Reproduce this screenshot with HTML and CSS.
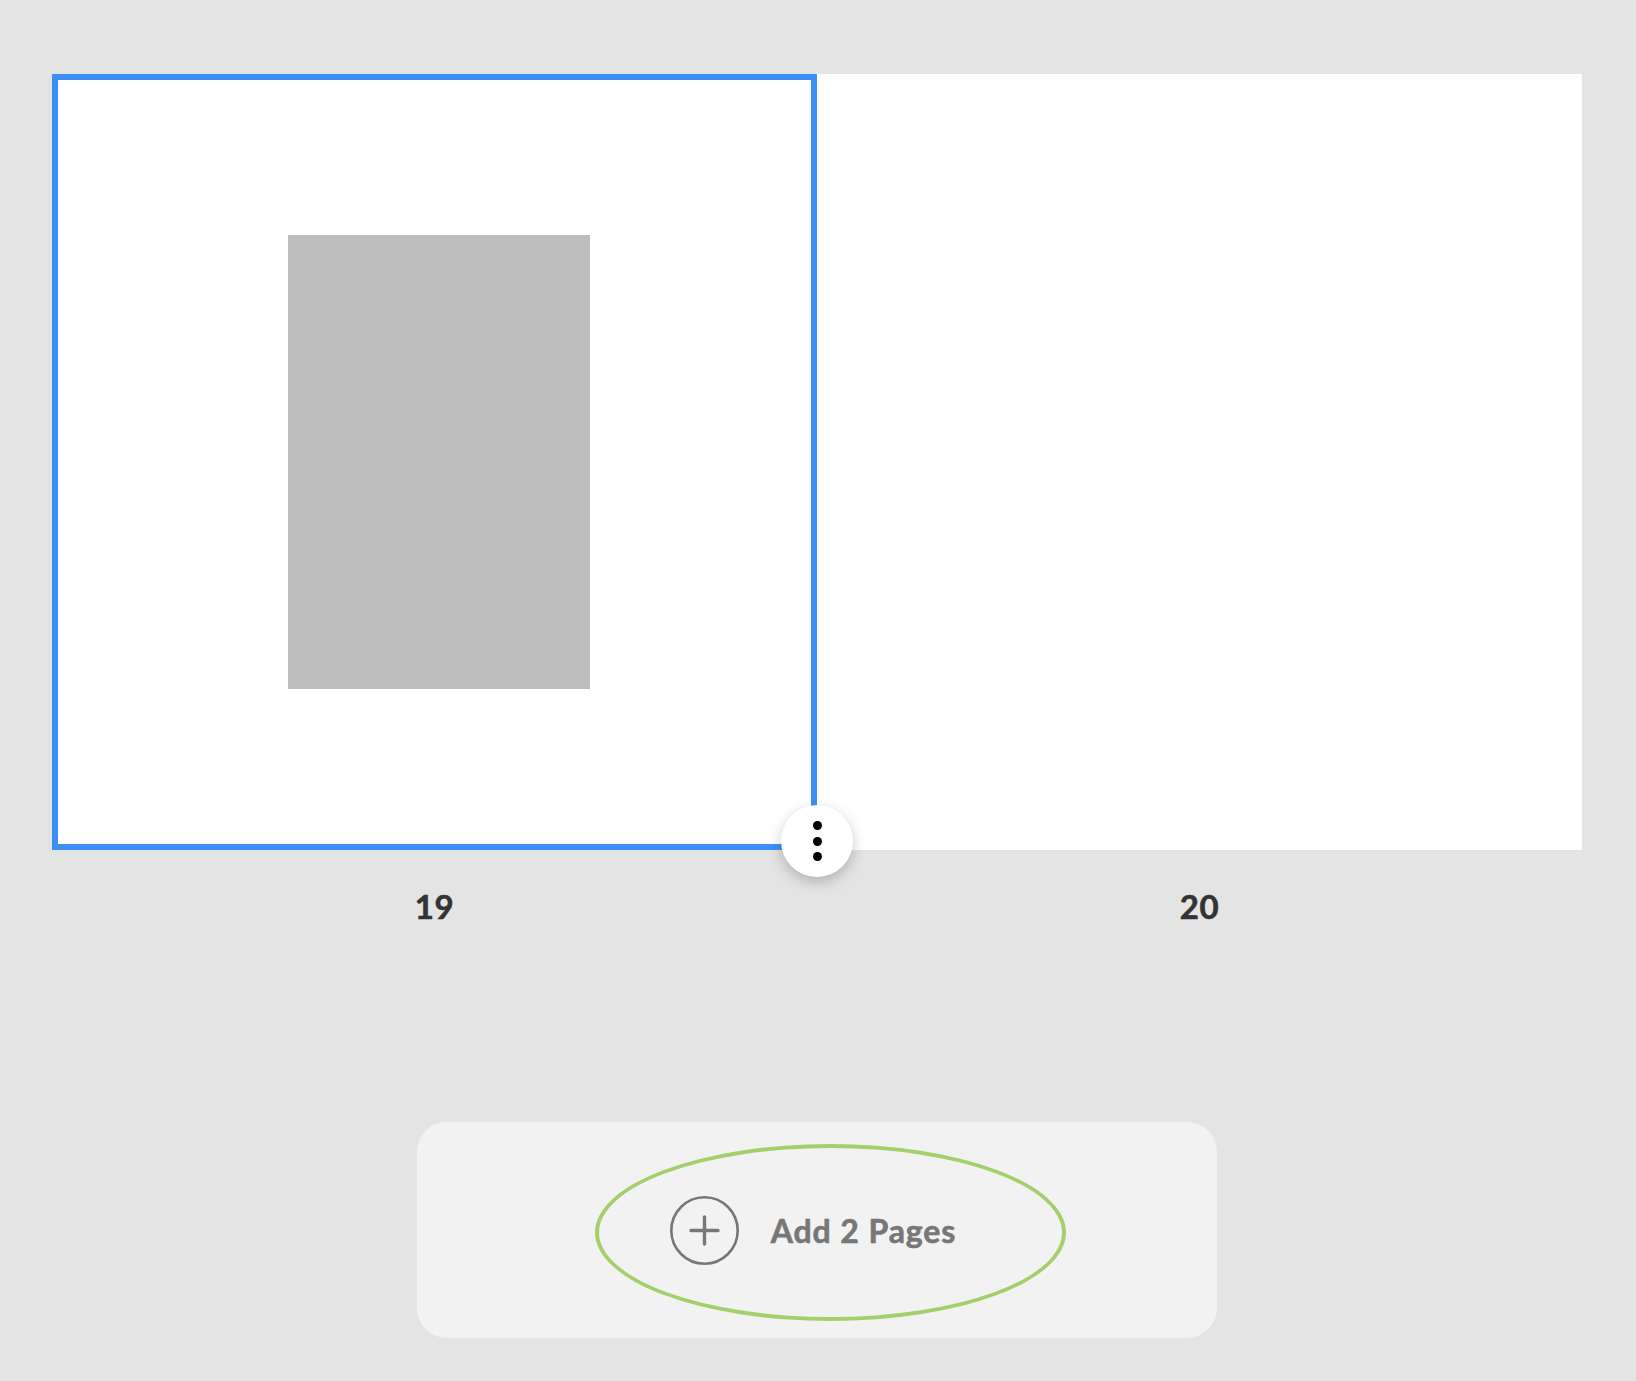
FILE: index.html
```html
<!DOCTYPE html>
<html lang="en">
<head>
<meta charset="utf-8">
<title>Pages 19–20</title>
<link rel="stylesheet" href="styles.css">
</head>
<body>
<main class="canvas">
  <div class="spread-wrap">
    <div class="spread">
      <div class="page page--selected">
        <div class="photo-slot"></div>
      </div>
      <div class="page"></div>
    </div>
    <button class="menu-btn" type="button" aria-label="More options">
      <span class="dot"></span><span class="dot"></span><span class="dot"></span>
    </button>
  </div>
  <div class="labels">
    <div class="label">19</div>
    <div class="label">20</div>
  </div>
  <div class="add-panel">
    <div class="add-btn">
      <svg class="plus-icon" width="69" height="69" viewBox="0 0 69 69" aria-hidden="true">
        <circle cx="34.5" cy="34.5" r="33.2" fill="none" stroke="#777777" stroke-width="2.6"/>
        <path d="M34.5 21V48M21 34.5H48" stroke="#777777" stroke-width="3.4" stroke-linecap="round"/>
      </svg>
      <span class="add-text">Add 2 Pages</span>
    </div>
    <div class="highlight"></div>
  </div>
</main>
</body>
</html>
```
FILE: styles.css
```css
html, body {
  margin: 0;
  padding: 0;
}
body {
  background: #e4e4e4;
  font-family: Lato, "Open Sans", sans-serif;
  width: 1636px;
  min-height: 1381px;
}
.canvas {
  padding-top: 74px;
  padding-left: 52px;
  width: 1530px;
}
.spread-wrap {
  position: relative;
  width: 1530px;
}
.spread {
  display: flex;
}
.page {
  width: 765px;
  height: 776px;
  background: #ffffff;
  box-sizing: border-box;
}
.page--selected {
  border: 6px solid #3d8ff6;
  display: flex;
  align-items: center;
  padding-left: 230px;
}
.photo-slot {
  width: 302px;
  height: 454px;
  background: #bdbdbd;
}
.menu-btn {
  position: absolute;
  left: 729px;
  top: 731px;
  width: 72px;
  height: 72px;
  border-radius: 50%;
  border: none;
  padding: 0;
  background: #ffffff;
  box-shadow: 0 5px 14px rgba(0, 0, 0, 0.22);
  display: flex;
  flex-direction: column;
  align-items: center;
  justify-content: center;
  gap: 6.5px;
  cursor: pointer;
}
.dot {
  width: 9px;
  height: 9px;
  border-radius: 50%;
  background: #000000;
}
.labels {
  display: flex;
  margin-top: 36px;
}
.label {
  width: 765px;
  text-align: center;
  font-size: 33px;
  line-height: 40px;
  font-weight: 700;
  color: #333333;
  letter-spacing: 0.5px;
  -webkit-text-stroke: 0.6px #333333;
}
.add-panel {
  position: relative;
  margin-top: 196px;
  margin-left: 365px;
  width: 800px;
  height: 216px;
  border-radius: 30px;
  background: #f2f2f2;
  display: flex;
  align-items: center;
  justify-content: center;
}
.add-btn {
  display: flex;
  align-items: center;
  gap: 32px;
  margin-right: 8px;
}
.plus-icon {
  display: block;
}
.add-text {
  font-size: 32px;
  font-weight: 700;
  color: #777777;
  letter-spacing: 0.9px;
  -webkit-text-stroke: 0.6px #777777;
}
.highlight {
  position: absolute;
  left: 178px;
  top: 22px;
  width: 471px;
  height: 177px;
  box-sizing: border-box;
  border: 4px solid #a4cf6a;
  border-radius: 50%;
  pointer-events: none;
}
```
